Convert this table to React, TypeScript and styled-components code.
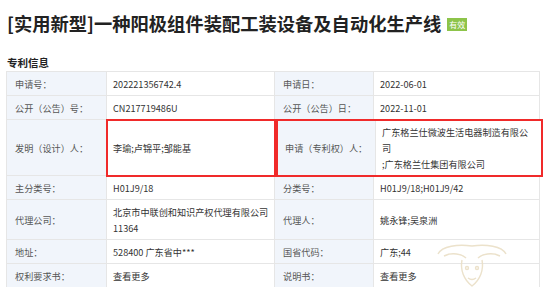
import styled, { createGlobalStyle } from "styled-components";

const GlobalStyle = createGlobalStyle`
  html, body {
    margin: 0;
    padding: 0;
    background: #fff;
  }
  body {
    font-family: "Noto Sans CJK SC", "Noto Sans", sans-serif;
    color: #333;
  }
`;

const Page = styled.div`
  position: relative;
  width: 550px;
  height: 287px;
  overflow: hidden;
  padding: 9px 11px 0 6px;
  box-sizing: border-box;
`;

const TitleRow = styled.div`
  display: flex;
  align-items: center;
  gap: 6px;
  padding-left: 1px;
`;

const Title = styled.h1`
  margin: 0;
  font-size: 18.3px;
  line-height: 28px;
  font-weight: 700;
  color: #222;
  white-space: nowrap;
`;

const Badge = styled.span`
  display: inline-block;
  margin-top: 3px;
  padding: 0 2px;
  height: 13px;
  line-height: 13px;
  font-size: 8px;
  color: #fff;
  background: #8dc44a;
`;

const SectionTitle = styled.h2`
  margin: 21px 0 3px 1px;
  font-size: 10.5px;
  line-height: 10px;
  font-weight: 700;
  color: #222;
`;

const Table = styled.div`
  border-top: 1px solid #e6e6e6;
  border-left: 1px solid #e6e6e6;
  width: 533px;
`;

const Row = styled.div`
  display: grid;
  grid-template-columns: 100px 168px 99px 166px;
`;

const Cell = styled.div<{ $label?: boolean }>`
  display: flex;
  align-items: center;
  padding: ${(p) => (p.$label ? "3.5px 4px 3.5px 8px" : "3.5px 2px 3.5px 6px")};
  font-size: 9.15px;
  line-height: 16px;
  white-space: nowrap;
  color: ${(p) => (p.$label ? "#555" : "#333")};
  background: ${(p) => (p.$label ? "#f1f5fb" : "#fff")};
  border-right: 1px solid #e6e6e6;
  border-bottom: 1px solid #e6e6e6;
`;

const Marked = styled(Cell)`
  outline: 2px solid #f02a2a;
  outline-offset: -1px;
  position: relative;
  z-index: 1;
`;

const MarkedPair = styled.div`
  grid-column: span 2;
  display: grid;
  grid-template-columns: 99px 166px;
  outline: 2px solid #f02a2a;
  outline-offset: -1px;
  margin-left: 2px;
  margin-right: -2px;
  position: relative;
  z-index: 1;
`;

const Watermark = styled.svg`
  position: absolute;
  left: 432px;
  top: 244px;
  pointer-events: none;
`;

type Pair = [string, React.ReactNode];

const rows: [Pair, Pair][] = [
  [["申请号：", "202221356742.4"], ["申请日：", "2022-06-01"]],
  [["公开（公告）号：", "CN217719486U"], ["公开（公告）日：", "2022-11-01"]],
];

const rowsAfter: [Pair, Pair][] = [
  [["主分类号：", "H01J9/18"], ["分类号：", "H01J9/18;H01J9/42"]],
  [
    ["代理公司：", <>北京市中联创和知识产权代理有限公司<br />11364</>],
    ["代理人：", "姚永锋;吴泉洲"],
  ],
  [["地址：", "528400 广东省中***"], ["国省代码：", "广东;44"]],
  [["权利要求书：", "查看更多"], ["说明书：", "查看更多"]],
];

const renderRow = ([a, b]: [Pair, Pair], i: number) => (
  <Row key={i}>
    <Cell $label>{a[0]}</Cell>
    <Cell>{a[1]}</Cell>
    <Cell $label>{b[0]}</Cell>
    <Cell>{b[1]}</Cell>
  </Row>
);

export default function App() {
  return (
    <>
      <GlobalStyle />
      <Page>
        <TitleRow>
          <Title>[实用新型]一种阳极组件装配工装设备及自动化生产线</Title>
          <Badge>有效</Badge>
        </TitleRow>
        <SectionTitle>专利信息</SectionTitle>
        <Table>
          {rows.map(renderRow)}
          <Row>
            <Cell $label>发明（设计）人：</Cell>
            <Marked>李瑜;卢锦平;邹能基</Marked>
            <MarkedPair>
              <Cell $label>申请（专利权）人：</Cell>
              <Cell>
                广东格兰仕微波生活电器制造有限公
                <br />
                司
                <br />
                ;广东格兰仕集团有限公司
              </Cell>
            </MarkedPair>
          </Row>
          {rowsAfter.map(renderRow)}
        </Table>
        <Watermark width="80" height="44" viewBox="0 0 80 44">
          <g fill="none" stroke="#eadfc6" strokeWidth="1.4" opacity="0.9">
            <path d="M6 10 C10 2, 26 0, 40 2 C54 0, 70 2, 74 10" />
            <path d="M12 12 C20 8, 30 10, 34 14 M68 12 C60 8, 50 10, 46 14" />
            <path d="M30 16 C28 26, 32 36, 40 42 C48 36, 52 26, 50 16" />
            <circle cx="35" cy="24" r="1.5" />
            <circle cx="45" cy="24" r="1.5" />
            <path d="M36 34 Q40 37 44 34" />
          </g>
        </Watermark>
      </Page>
    </>
  );
}
